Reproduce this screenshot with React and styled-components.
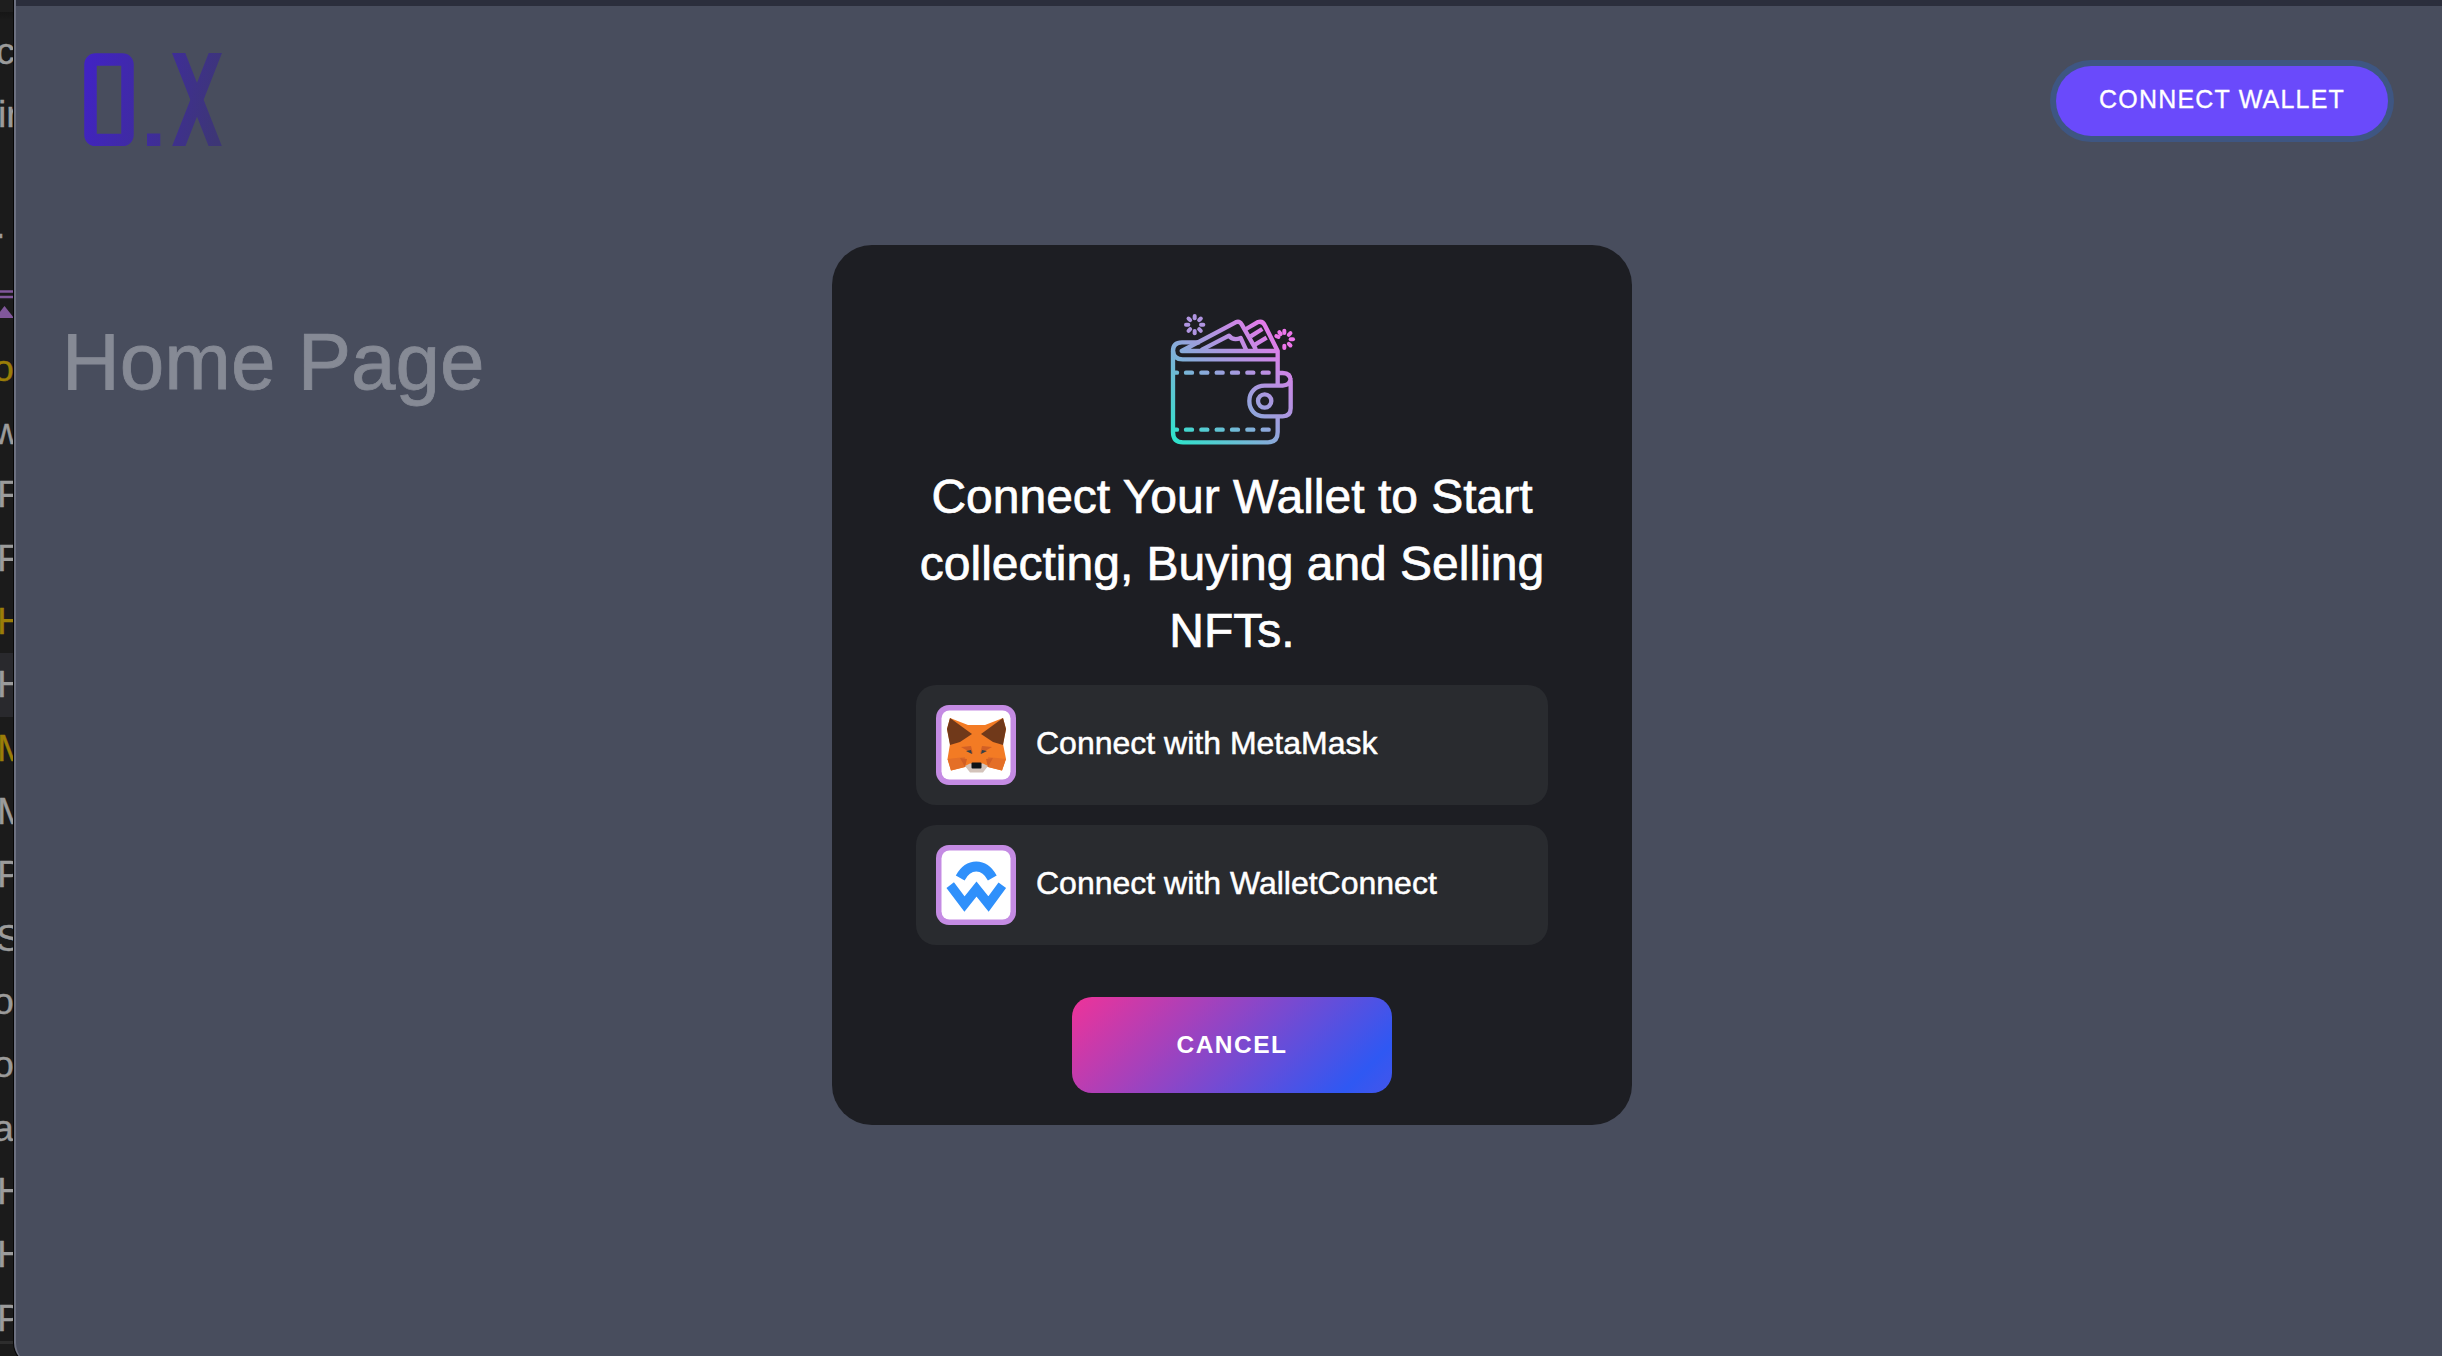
import React from 'react';
import styled, { createGlobalStyle } from 'styled-components';

const Global = createGlobalStyle`
  *, *::before, *::after { box-sizing: border-box; }
  html, body { margin: 0; overflow: hidden; }
  body {
    background: #1b1b1b;
    color: #fff;
    font-family: "Liberation Sans", Arial, sans-serif;
  }
  button { font-family: inherit; border: 0; margin: 0; }
`;

const Screen = styled.div`
  display: flex;
  width: 100vw;
  height: 100vh;
  overflow: hidden;
`;

const Sidebar = styled.div`
  flex: 0 0 13px;
  display: flex;
  flex-direction: column;
  overflow: hidden;
  background: linear-gradient(#1e1e1e 12px, #161616 12px, #1b1b1b 20px);
`;

const SideRow = styled.div`
  flex: 0 0 63.35px;
  line-height: 63.35px;
  font-size: 37.5px;
  white-space: nowrap;
  text-indent: ${(p) => p.$x || 0}px;
  color: ${(p) => (p.$gold ? '#9a7d08' : '#9b9b9b')};
  background: ${(p) => (p.$active ? '#29292d' : 'transparent')};
  margin-top: ${(p) => p.$top || 0}px;
  -webkit-text-stroke: 0.4px currentColor;
`;

const Marker = styled.svg`
  display: block;
  flex: 0 0 29px;
  width: 13px;
  margin-top: 32px;
  margin-bottom: 18px;
`;

const SideRule = styled.div`
  flex: 0 0 3px;
  background: #2d2d2d;
  margin-top: -9px;
`;

const Browser = styled.div`
  flex: 1;
  min-width: 0;
  height: 1366px;
  margin-right: -6px;
  padding-left: 1px;
  background: #050505;
  border-bottom-left-radius: 23px;
`;

const Viewport = styled.div`
  position: relative;
  height: 1364px;
  border-left: 2px solid #6c7080;
  border-bottom-left-radius: 21px;
  background: #484d5d;
  overflow: hidden;
`;

const Toolbar = styled.div`
  height: 6px;
  background: #2b2e3c;
`;

const Header = styled.header`
  display: flex;
  justify-content: space-between;
  align-items: flex-start;
  padding: 47px 60px 0 68px;
`;

const Logo = styled.svg`
  display: block;
  width: 138px;
  height: 93px;
`;

const ConnectButton = styled.button`
  width: 332px;
  height: 70px;
  margin-top: 13px;
  padding: 0 0 3px;
  border-radius: 35px;
  background: #6a4afb;
  box-shadow: 0 0 0 6px #3e5682;
  color: #fff;
  font-size: 25px;
  letter-spacing: 1.2px;
  white-space: nowrap;
  -webkit-text-stroke: 0.3px #fff;
`;

const PageTitle = styled.h1`
  margin: 170px 0 0 46px;
  font-size: 80px;
  line-height: 92px;
  font-weight: 400;
  color: #868a95;
  -webkit-text-stroke: 0.8px #868a95;
`;

const Overlay = styled.div`
  position: absolute;
  inset: 6px 0 0 0;
  display: flex;
  align-items: center;
  justify-content: center;
`;

const Dialog = styled.section`
  width: 800px;
  height: 880px;
  padding: 50px 84px 0;
  border-radius: 40px;
  background: #1d1e23;
  display: flex;
  flex-direction: column;
  align-items: center;
`;

const WalletArt = styled.svg`
  display: block;
  flex: none;
  width: 164px;
  height: 165px;
`;

const Heading = styled.h2`
  margin: 3px -20px 20px;
  font-size: 48px;
  line-height: 67.2px;
  font-weight: 400;
  text-align: center;
  white-space: nowrap;
  -webkit-text-stroke: 0.7px #fff;
`;

const Options = styled.div`
  display: flex;
  flex-direction: column;
  gap: 20px;
  width: 100%;
`;

const Option = styled.button`
  display: flex;
  align-items: center;
  gap: 20px;
  height: 120px;
  padding: 0 20px;
  border-radius: 20px;
  background: #292b2f;
  color: #fff;
  font-size: 32px;
  text-align: left;
`;

const OptionIcon = styled.svg`
  display: block;
  width: 80px;
  height: 80px;
`;

const OptionLabel = styled.span`
  margin-top: -2px;
  white-space: nowrap;
  -webkit-text-stroke: 0.5px #fff;
`;

const CancelButton = styled.button`
  width: 320px;
  height: 96px;
  margin-top: 52px;
  padding: 0;
  border-radius: 20px;
  background: linear-gradient(135deg, #ee3399 0%, #2f58f3 88%, #4455ea 100%);
  color: #fff;
  font-size: 24.5px;
  font-weight: 700;
  letter-spacing: 1.5px;
`;

function LogoMark() {
  return (
    <Logo viewBox="84 53 138 93" aria-label="0.X">
      <defs>
        <linearGradient id="logo" gradientUnits="userSpaceOnUse" x1="84" y1="90" x2="221" y2="118">
          <stop offset="0" stopColor="#4123c2" />
          <stop offset="1" stopColor="#3d3675" />
        </linearGradient>
      </defs>
      <g stroke="url(#logo)" fill="none">
        <rect x="90.5" y="59.5" width="37" height="80.5" rx="5" strokeWidth="12.5" />
        <line x1="174.7" y1="43" x2="219.3" y2="156.5" strokeWidth="12.4" />
        <line x1="219.3" y1="43" x2="174.7" y2="156.5" strokeWidth="12.4" />
      </g>
      <rect x="147" y="133.500" width="13.300" height="12.500" fill="url(#logo)" />
    </Logo>
  );
}

const RAYS = [0, 45, 90, 135, 180, 225, 270, 315];

function Burst({ x, y, angles }) {
  return angles.map((a) => (
    <line key={a} x1={x} y1={y - 19} x2={x} y2={y - 26} strokeWidth="12" transform={`rotate(${a} ${x} ${y})`} />
  ));
}

function Wallet() {
  return (
    <WalletArt viewBox="1 0 492 495">
      <defs>
        <linearGradient id="wallet" gradientUnits="userSpaceOnUse" x1="78" y1="436" x2="410" y2="104">
          <stop offset="0" stopColor="#30e2cb" />
          <stop offset="0.5" stopColor="#96a2dc" />
          <stop offset="1" stopColor="#f074ec" />
        </linearGradient>
      </defs>
      <g fill="none" stroke="url(#wallet)" strokeWidth="13" strokeLinecap="round" strokeLinejoin="round">
        <Burst x={135} y={89} angles={RAYS} />
        <Burst x={404} y={133} angles={[0, 45, 90, 135, 180, 292, 325]} />
        <path d="M150 142H97Q70 142 70 168V411Q70 442 100 442H355Q384 442 384 411V368" strokeLinecap="butt" />
        <path d="M70 168Q72 193 99 193H384" strokeLinecap="butt" />
        <path d="M384 272V168L346 92Q339 76 323 82L289 102" strokeLinecap="butt" />
        <path d="M378 168H96L258 82Q269 77 276 88L317 160" />
        <path d="M157 164L238 122Q250 138 273 129L289 164" />
        <path d="M303 124L338 102M311 152L351 128" strokeLinecap="butt" />
        <path d="M384 234H399Q423 234 423 258V340Q423 364 399 364H345C316 364 299 344 299 318C299 292 318 272 345 272H399Q423 270 423 250" strokeLinecap="butt" />
        <circle cx="345" cy="318" r="20" />
        {[233, 404].map((y) => (
          <g key={y}>
            <path d={`M76 ${y}H82`} />
            {[109, 155, 201, 247, 293, 339].map((x) => (
              <line key={x} x1={x} x2={x + 18} y1={y} y2={y + 0.01} />
            ))}
          </g>
        ))}
      </g>
    </WalletArt>
  );
}

function Frame() {
  return (
    <>
      <rect width="80" height="80" rx="13" fill="#c48be3" />
      <rect x="5.5" y="5.5" width="69" height="69" rx="8" fill="#fff" />
    </>
  );
}

function MetaMask() {
  return (
    <OptionIcon viewBox="0 0 80 80">
      <Frame />
      <path d="M14 13L32 20H49L67 13L70 24L67 39L70 54L66 65.5L52 62H29L15 65.5L11.5 54L14 39L11 24Z" fill="#f37b24" />
      <path d="M14 13L36 29L24 37L14 40L11 24Z" fill="#70391a" />
      <path d="M67 13L45 29L57 37L67 40L70 24Z" fill="#70391a" />
      <path d="M11.5 54L29 52L29 62L15 65.5ZM70 54L52 52L52 62L66 65.5Z" fill="#e46f27" />
      <path d="M25 42L35 41L37 49ZM56 42L46 41L44 49ZM24 53L31 54L29 62ZM57 53L50 54L52 62Z" fill="#d15f25" />
      <path d="M30 46L35 45L36 49ZM51 46L46 45L45 49Z" fill="#344047" />
      <path d="M29 61L34 58.500H47L52 61L47 67.500H34Z" fill="#d3c3ba" />
      <rect x="35.5" y="57.5" width="10" height="6" rx="1" fill="#101417" />
    </OptionIcon>
  );
}

function WalletConnect() {
  return (
    <OptionIcon viewBox="0 0 80 80">
      <Frame />
      <g fill="none" stroke="#2f90fb">
        <path d="M24.2 33C32.5 17.800 48 17.800 56.300 33" strokeWidth="10" />
        <path d="M14.2 40.2L28.5 59L40.5 44L52.5 59L66.300 40.2" strokeWidth="9.4" />
      </g>
    </OptionIcon>
  );
}

export default function App() {
  return (
    <>
      <Global />
      <Screen>
        <Sidebar>
          <SideRow $x={-4} $top={19.5}>c</SideRow>
          <SideRow $x={-2}>ir</SideRow>
          <SideRow $x={-5} $top={48}>.</SideRow>
          <Marker viewBox="0 0 13 29">
            <path d="M0 1.5H13M0 7H13" stroke="#81579b" strokeWidth="2.5" />
            <path d="M-5 28L4.5 16L14 28Z" fill="#81579b" />
          </Marker>
          <SideRow $gold $x={-7}>o</SideRow>
          <SideRow $x={-7}>w</SideRow>
          <SideRow $x={-3}>F</SideRow>
          <SideRow $x={-3}>F</SideRow>
          <SideRow $gold $x={-3}>H</SideRow>
          <SideRow $active $x={-3}>H</SideRow>
          <SideRow $gold $x={-3}>M</SideRow>
          <SideRow $x={-3}>M</SideRow>
          <SideRow $x={-3}>P</SideRow>
          <SideRow $x={-4}>S</SideRow>
          <SideRow $x={-7}>o</SideRow>
          <SideRow $x={-7}>o</SideRow>
          <SideRow $x={-7}>a</SideRow>
          <SideRow $x={-3}>H</SideRow>
          <SideRow $x={-3}>H</SideRow>
          <SideRow $x={-3}>P</SideRow>
          <SideRule />
        </Sidebar>
        <Browser>
          <Viewport>
            <Toolbar />
            <Header>
              <LogoMark />
              <ConnectButton>CONNECT WALLET</ConnectButton>
            </Header>
            <PageTitle>Home Page</PageTitle>
            <Overlay>
              <Dialog>
                <Wallet />
                <Heading>
                  Connect Your Wallet to Start
                  <br />
                  collecting, Buying and Selling
                  <br />
                  NFTs.
                </Heading>
                <Options>
                  <Option>
                    <MetaMask />
                    <OptionLabel>Connect with MetaMask</OptionLabel>
                  </Option>
                  <Option>
                    <WalletConnect />
                    <OptionLabel>Connect with WalletConnect</OptionLabel>
                  </Option>
                </Options>
                <CancelButton>CANCEL</CancelButton>
              </Dialog>
            </Overlay>
          </Viewport>
        </Browser>
      </Screen>
    </>
  );
}
